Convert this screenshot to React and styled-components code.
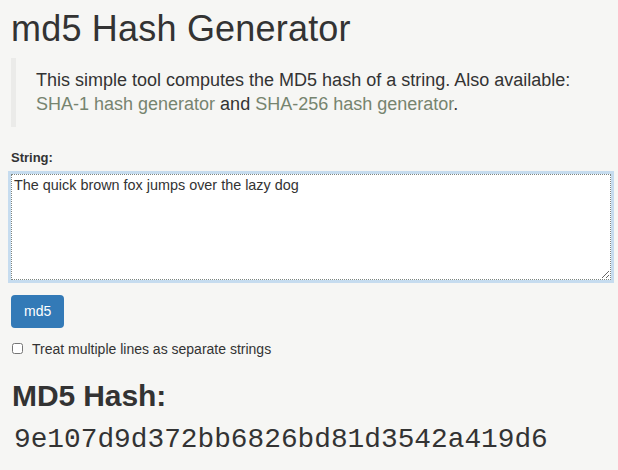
import React from "react";
import styled, { createGlobalStyle } from "styled-components";

const GlobalStyle = createGlobalStyle`
  html, body {
    margin: 0;
    padding: 0;
    background: #f6f6f4;
  }
  body {
    font-family: "Liberation Sans", Arial, sans-serif;
    color: #333;
  }
`;

const Page = styled.div`
  padding: 0 7px 0 11px;
  width: 600px;
`;

const Title = styled.h1`
  font-size: 36px;
  font-weight: 500;
  line-height: 1.1;
  margin: 9px 0 9px;
  letter-spacing: 0.2px;
`;

const Quote = styled.blockquote`
  margin: 0 0 23px;
  padding: 10px 20px 11px 20px;
  border-left: 5px solid #ebebe9;
  font-size: 18px;
  line-height: 24px;
`;

const Link = styled.a`
  color: #76846f;
  text-decoration: none;
`;

const Label = styled.label`
  display: block;
  font-size: 13px;
  font-weight: bold;
  margin-bottom: 9px;
`;

const Input = styled.textarea`
  display: block;
  box-sizing: border-box;
  width: 600px;
  height: 106px;
  margin: 0 0 15px;
  padding: 2px 2px;
  border: 1px dotted #7d8580;
  border-radius: 0;
  background: #fff;
  outline: none;
  box-shadow: 0 0 0 3px #c6dcef;
  font-family: "Liberation Sans", Arial, sans-serif;
  font-size: 14.4px;
  color: #333;
  resize: vertical;
`;

const Button = styled.button`
  display: block;
  height: 33px;
  padding: 0 13px;
  border: none;
  border-radius: 4px;
  background: #337ab7;
  color: #fff;
  font-family: "Liberation Sans", Arial, sans-serif;
  font-size: 14px;
  margin-bottom: 13px;
`;

const CheckRow = styled.label`
  display: flex;
  align-items: center;
  gap: 9px;
  font-size: 14px;
  color: #333;
`;

const Box = styled.input`
  margin: 0 0 0 1px;
  width: 11px;
  height: 11px;
`;

const SubTitle = styled.h2`
  font-size: 30px;
  font-weight: bold;
  line-height: 1.1;
  margin: 22px 0 12px;
  letter-spacing: -0.1px;
  padding-left: 1px;
`;

const Hash = styled.div`
  font-family: "Liberation Mono", "Courier New", monospace;
  font-size: 27.8px;
  padding-left: 3px;
`;

export default function App() {
  return (
    <Page>
      <GlobalStyle />
      <Title>md5 Hash Generator</Title>
      <Quote>
        This simple tool computes the MD5 hash of a string. Also available:
        <br />
        <Link href="#">SHA-1 hash generator</Link> and{" "}
        <Link href="#">SHA-256 hash generator</Link>.
      </Quote>
      <Label>String:</Label>
      <Input defaultValue="The quick brown fox jumps over the lazy dog" />
      <Button>md5</Button>
      <CheckRow>
        <Box type="checkbox" />
        Treat multiple lines as separate strings
      </CheckRow>
      <SubTitle>MD5 Hash:</SubTitle>
      <Hash>9e107d9d372bb6826bd81d3542a419d6</Hash>
    </Page>
  );
}
